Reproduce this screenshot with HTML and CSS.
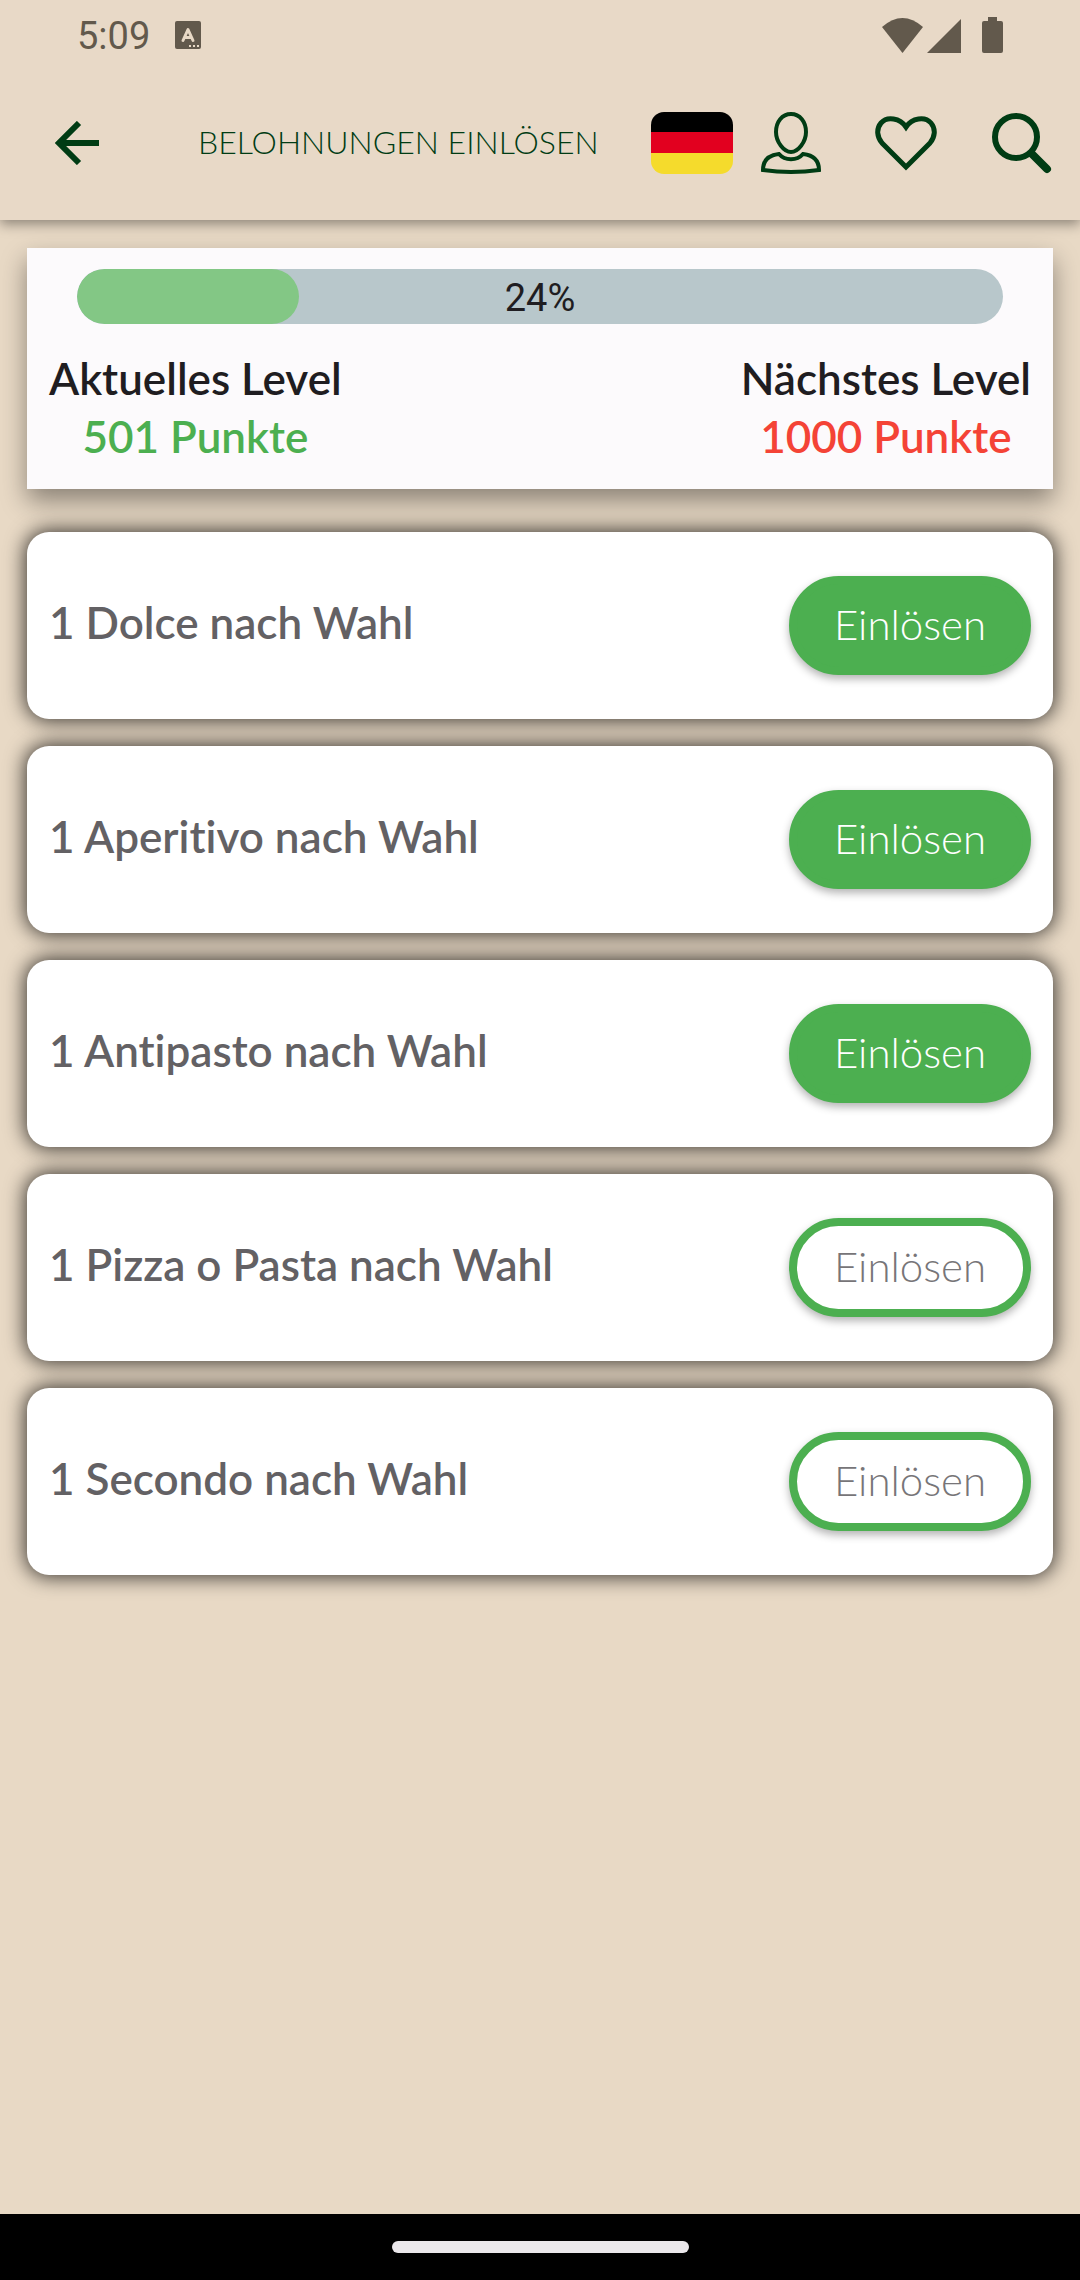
FILE: index.html
```
<!DOCTYPE html>
<html lang="de">
<head>
    <meta charset="UTF-8">
    <meta name="viewport" content="width=device-width, initial-scale=1.0">
    <title>Belohnungen einlösen</title>
    <link rel="stylesheet" href="styles.css">
</head>
<body>

    <!-- Header -->
    <header class="header">
        <div class="status-bar">
            <span class="time">5:09</span>
            <svg class="badge" width="26" height="28" viewBox="0 0 26 28">
                <rect width="26" height="28" rx="2" fill="#62594c"/>
                <path d="M8 19.500L13 8.500L18 19.500M10 16.500H16" fill="none" stroke="#e8d9c6" stroke-width="3" stroke-linecap="round" stroke-linejoin="round"/>
                <path d="M14 24h2v2h-2zM18 24h2v2h-2zM22 24h2v2h-2z" fill="#e8d9c6"/>
            </svg>
            <div class="status-icons">
                <svg width="41" height="36" viewBox="0 0 41 36"><path d="M0 10Q20.500-8 41 10L20.500 36Z"/></svg>
                <svg width="34" height="36" viewBox="0 0 34 36"><path d="M0 36L34 2V36Z"/></svg>
                <svg class="battery" width="21" height="36" viewBox="0 0 21 36"><path d="M6 0h9v4h4a2 2 0 0 1 2 2v28a2 2 0 0 1-2 2H2a2 2 0 0 1-2-2V6a2 2 0 0 1 2-2h4z"/></svg>
            </div>
        </div>

        <div class="app-bar">
            <button class="icon-btn" aria-label="Zurück">
                <svg width="44" height="44" viewBox="0 0 44 44"><path d="M24 2L4 22L24 42M3 22H44" stroke-width="6"/></svg>
            </button>
            <h1>BELOHNUNGEN EINLÖSEN</h1>
            <div class="actions">
                <button class="icon-btn flag" aria-label="Sprache">
                    <svg width="82" height="62" viewBox="0 0 82 62">
                        <clipPath id="flagShape"><rect width="82" height="62" rx="13"/></clipPath>
                        <g clip-path="url(#flagShape)" stroke="none">
                            <rect width="82" height="20" fill="#000"/>
                            <rect y="20" width="82" height="21" fill="#e2001f"/>
                            <rect y="41" width="82" height="21" fill="#f5db2c"/>
                        </g>
                    </svg>
                </button>
                <button class="icon-btn" aria-label="Profil">
                    <svg width="60" height="62" viewBox="0 0 60 62">
                        <path d="M30 2C39 2 45 10 45 20C45 30 37 40 30 40C23 40 15 30 15 20C15 10 21 2 30 2Z" stroke-width="4"/>
                        <path d="M18 42C9 43 2 47 2 58Q30 62 58 58C58 47 51 43 42 42C36 49 24 49 18 42Z" stroke-width="4"/>
                    </svg>
                </button>
                <button class="icon-btn" aria-label="Favoriten">
                    <svg width="62" height="62" viewBox="0 0 62 62"><path d="M31 15C25 6 12 4 6 11C1 17 2 25 7 31L31 55L55 31C60 25 61 17 56 11C50 4 37 6 31 15Z" stroke-width="5"/></svg>
                </button>
                <button class="icon-btn" aria-label="Suchen">
                    <svg width="61" height="62" viewBox="0 0 61 62">
                        <circle cx="25" cy="25" r="21" stroke-width="6"/>
                        <path d="M41 42L56 57" stroke-width="8" stroke-linecap="round"/>
                    </svg>
                </button>
            </div>
        </div>
    </header>

    <main class="content">
        <!-- Level -->
        <section class="level-card">
            <div class="progress" role="progressbar" aria-label="Fortschritt" aria-valuenow="24" aria-valuemin="0" aria-valuemax="100">
                <div class="progress-fill" style="width: 24%"></div>
                <span class="progress-text">24%</span>
            </div>
            <div class="levels">
                <div class="level">
                    <p>Aktuelles Level</p>
                    <p class="current">501 Punkte</p>
                </div>
                <div class="level">
                    <p>Nächstes Level</p>
                    <p class="next">1000 Punkte</p>
                </div>
            </div>
        </section>

        <!-- Rewards -->
        <ul class="rewards">
            <li class="reward">
                <span class="reward-name">1 Dolce nach Wahl</span>
                <button class="redeem">Einlösen</button>
            </li>
            <li class="reward">
                <span class="reward-name">1 Aperitivo nach Wahl</span>
                <button class="redeem">Einlösen</button>
            </li>
            <li class="reward">
                <span class="reward-name">1 Antipasto nach Wahl</span>
                <button class="redeem">Einlösen</button>
            </li>
            <li class="reward">
                <span class="reward-name">1 Pizza o Pasta nach Wahl</span>
                <button class="redeem locked">Einlösen</button>
            </li>
            <li class="reward">
                <span class="reward-name">1 Secondo nach Wahl</span>
                <button class="redeem locked">Einlösen</button>
            </li>
        </ul>
    </main>

    <footer class="nav-bar">
        <div class="nav-handle"></div>
    </footer>

</body>
</html>
```
FILE: styles.css
```
* {
    margin: 0;
    padding: 0;
    box-sizing: border-box;
}
body {
    min-height: 100vh;
    display: flex;
    flex-direction: column;
    background: #e8d9c5;
    font-family: Lato, "Liberation Sans", sans-serif;
    font-variant-ligatures: none;
    color: #1f1d21;
}
.header {
    background: #e8d9c7;
    box-shadow: 0 4px 12px rgba(0, 0, 0, 0.4);
}
.status-bar {
    display: flex;
    align-items: center;
    height: 66px;
    padding: 4px 77px 0;
    color: #62594c;
    font-family: Roboto, sans-serif;
    font-size: 38px;
}
.time {
    padding-top: 2px;
}
.badge {
    margin-left: 25px;
}
.status-icons {
    display: flex;
    gap: 4px;
    margin-left: auto;
    fill: #62594c;
}
.battery {
    margin-left: 17px;
}
.app-bar {
    display: flex;
    align-items: center;
    height: 154px;
    padding: 0 28px 0 55px;
}
h1 {
    margin-left: 99px;
    padding-bottom: 4px;
    color: #003c14;
    font-size: 32px;
    font-weight: 300;
    white-space: nowrap;
}
.icon-btn {
    display: flex;
    border: none;
    background: none;
    cursor: pointer;
}
.icon-btn svg {
    fill: none;
    stroke: #003c14;
}
.actions {
    display: flex;
    gap: 54px;
    margin-left: auto;
}
.flag {
    margin-right: -26px;
}
.content {
    flex: 1;
    padding: 28px 27px;
}
.level-card {
    padding: 21px 22px 24px;
    background: #fcfafc;
    box-shadow: 0 12px 24px rgba(0, 0, 0, 0.4);
}
.progress {
    position: relative;
    height: 55px;
    margin: 0 28px 25px;
    border-radius: 28px;
    background: #b8c7cb;
    overflow: hidden;
}
.progress-fill {
    height: 100%;
    border-radius: 28px;
    background: #83c785;
}
.progress-text {
    position: absolute;
    inset: 0;
    text-align: center;
    font-family: Roboto, sans-serif;
    font-size: 38px;
    line-height: 58px;
}
.levels {
    display: flex;
    justify-content: space-between;
}
.level {
    text-align: center;
    font-size: 44px;
    font-weight: 600;
    line-height: 58px;
}
.current {
    color: #4caf50;
}
.next {
    color: #f44336;
}
.rewards {
    display: grid;
    gap: 27px;
    margin-top: 43px;
    list-style: none;
}
.reward {
    display: flex;
    align-items: center;
    justify-content: space-between;
    min-height: 187px;
    padding: 22px;
    border-radius: 22px;
    background: #fff;
    box-shadow: 0 0 20px 2px rgba(0, 0, 0, 0.75);
}
.reward-name {
    padding-bottom: 8px;
    color: #636164;
    font-size: 44px;
    font-weight: 600;
}
.redeem {
    min-width: 242px;
    height: 99px;
    padding-bottom: 4px;
    border: 8px solid #4caf50;
    border-radius: 50px;
    background: #4caf50;
    box-shadow: 0 4px 8px rgba(0, 0, 0, 0.3);
    color: #fff;
    font-family: inherit;
    font-size: 42px;
    font-weight: 300;
    cursor: pointer;
}
.redeem.locked {
    background: #fff;
    color: #777578;
}
.nav-bar {
    display: flex;
    align-items: center;
    justify-content: center;
    height: 66px;
    background: #000;
}
.nav-handle {
    width: 297px;
    height: 12px;
    border-radius: 6px;
    background: #ebe8eb;
}
```
